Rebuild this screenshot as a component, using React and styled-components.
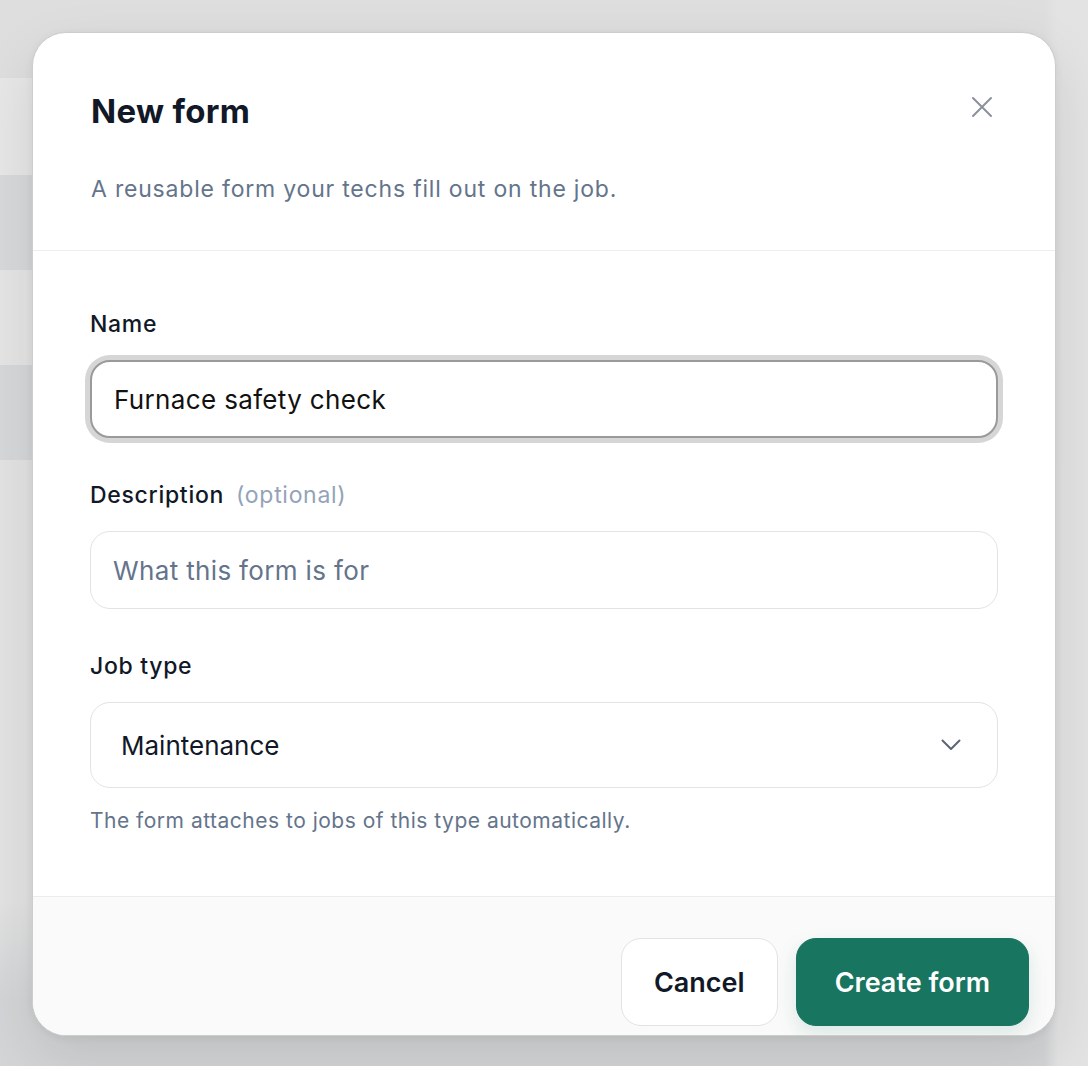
import React from "react";
import styled, { createGlobalStyle } from "styled-components";

const GlobalStyle = createGlobalStyle`
  * { box-sizing: border-box; }
  body {
    margin: 0;
    font-family: "Inter", "Noto Sans", sans-serif;
    -webkit-font-smoothing: antialiased;
  }
`;

// Dimmed page behind the modal
const Backdrop = styled.div`
  min-height: 1066px;
  padding: 32px;
  background:
    linear-gradient(to right, transparent 1044px, #e3e3e3 1058px),
    linear-gradient(
      to bottom,
      #dedede 0 78px,
      #e7e7e7 78px 175px,
      #d8d9da 175px 270px,
      #e5e5e5 270px 365px,
      #d7d8d9 365px 460px,
      #e3e3e3 460px 900px,
      #d3d5d6 1000px
    );
`;

const Dialog = styled.div`
  width: 1024px;
  height: 1004px;
  display: flex;
  flex-direction: column;
  background: #fff;
  border: 1px solid #cdcdcd;
  border-radius: 34px;
  overflow: hidden;
  box-shadow: 0 24px 60px rgba(0, 0, 0, 0.1), 0 2px 8px rgba(0, 0, 0, 0.06);
`;

const Header = styled.div`
  display: flex;
  justify-content: space-between;
  align-items: flex-start;
  padding: 58px 58px 45px;
  border-bottom: 1px solid #ededed;
`;

const Title = styled.h2`
  margin: 0;
  font-size: 33px;
  line-height: 41px;
  font-weight: 700;
  color: #111827;
  letter-spacing: 0.3px;
`;

const Subtitle = styled.p`
  margin: 41px 0 0;
  font-size: 23px;
  line-height: 32px;
  letter-spacing: 0.8px;
  color: #64748b;
`;

const CloseButton = styled.button`
  border: none;
  background: none;
  padding: 0;
  margin: 2px 1px 0 0;
  display: flex;
  color: #8b909c;
  cursor: pointer;
`;

const Body = styled.div`
  flex: 1;
  display: flex;
  flex-direction: column;
  gap: 42px;
  padding: 58px 57px 0;
`;

const Field = styled.div`
  display: flex;
  flex-direction: column;
  gap: 21px;
`;

const Label = styled.label`
  font-size: 23px;
  line-height: 30px;
  font-weight: 500;
  letter-spacing: 0.7px;
  color: #111827;
`;

const Optional = styled.span`
  margin-left: 12px;
  font-weight: 400;
  color: #94a3b8;
`;

const TextInput = styled.input`
  width: 100%;
  height: 78px;
  padding: 0 22px;
  font-family: inherit;
  font-size: 26px;
  letter-spacing: 0.35px;
  color: #111;
  background: #fff;
  border: ${(p) => (p.$focused ? "2px solid #9a9a9a" : "1px solid #e3e3e3")};
  border-radius: 20px;
  box-shadow: ${(p) => (p.$focused ? "0 0 0 5px #d6d6d6" : "none")};
  outline: none;

  &::placeholder {
    color: #64748b;
  }
`;

const SelectBox = styled.div`
  height: 86px;
  display: flex;
  align-items: center;
  justify-content: space-between;
  padding: 0 36px 0 30px;
  border: 1px solid #e3e3e3;
  border-radius: 20px;
  font-size: 26px;
  color: #111827;
`;

const Hint = styled.p`
  margin: -2px 0 0;
  font-size: 21px;
  line-height: 28px;
  letter-spacing: 0.5px;
  color: #64748b;
`;

const Footer = styled.div`
  display: flex;
  justify-content: flex-end;
  gap: 18px;
  padding: 41px 26px 9px;
  background: #fafafa;
  border-top: 1px solid #ececec;
`;

const Button = styled.button`
  height: 88px;
  padding: 0 ${(p) => (p.$primary ? "38px" : "32px")};
  font-family: inherit;
  font-size: 27px;
  font-weight: 600;
  border-radius: 20px;
  cursor: pointer;
  color: ${(p) => (p.$primary ? "#fff" : "#111827")};
  background: ${(p) => (p.$primary ? "#187560" : "#fff")};
  border: 1px solid ${(p) => (p.$primary ? "#187560" : "#e3e3e3")};
  box-shadow: ${(p) =>
    p.$primary ? "0 8px 20px rgba(24, 117, 96, 0.14)" : "none"};
`;

const App = () => {
  return (
    <>
      <GlobalStyle />
      <Backdrop>
        <Dialog>
          <Header>
            <div>
              <Title>New form</Title>
              <Subtitle>A reusable form your techs fill out on the job.</Subtitle>
            </div>
            <CloseButton aria-label="Close">
              <svg width="28" height="28" viewBox="0 0 28 28" fill="none">
                <path
                  d="M5 5 L23 23 M23 5 L5 23"
                  stroke="currentColor"
                  strokeWidth="2"
                  strokeLinecap="round"
                />
              </svg>
            </CloseButton>
          </Header>

          <Body>
            <Field>
              <Label>Name</Label>
              <TextInput $focused defaultValue="Furnace safety check" />
            </Field>

            <Field>
              <Label>
                Description<Optional>(optional)</Optional>
              </Label>
              <TextInput placeholder="What this form is for" />
            </Field>

            <Field>
              <Label>Job type</Label>
              <SelectBox>
                <span>Maintenance</span>
                <svg width="20" height="12" viewBox="0 0 20 12" fill="none">
                  <path
                    d="M1.5 1.5 L10 10 L18.5 1.5"
                    stroke="#5b6478"
                    strokeWidth="2"
                    strokeLinecap="round"
                    strokeLinejoin="round"
                  />
                </svg>
              </SelectBox>
              <Hint>The form attaches to jobs of this type automatically.</Hint>
            </Field>
          </Body>

          <Footer>
            <Button>Cancel</Button>
            <Button $primary>Create form</Button>
          </Footer>
        </Dialog>
      </Backdrop>
    </>
  );
};

export default App;
